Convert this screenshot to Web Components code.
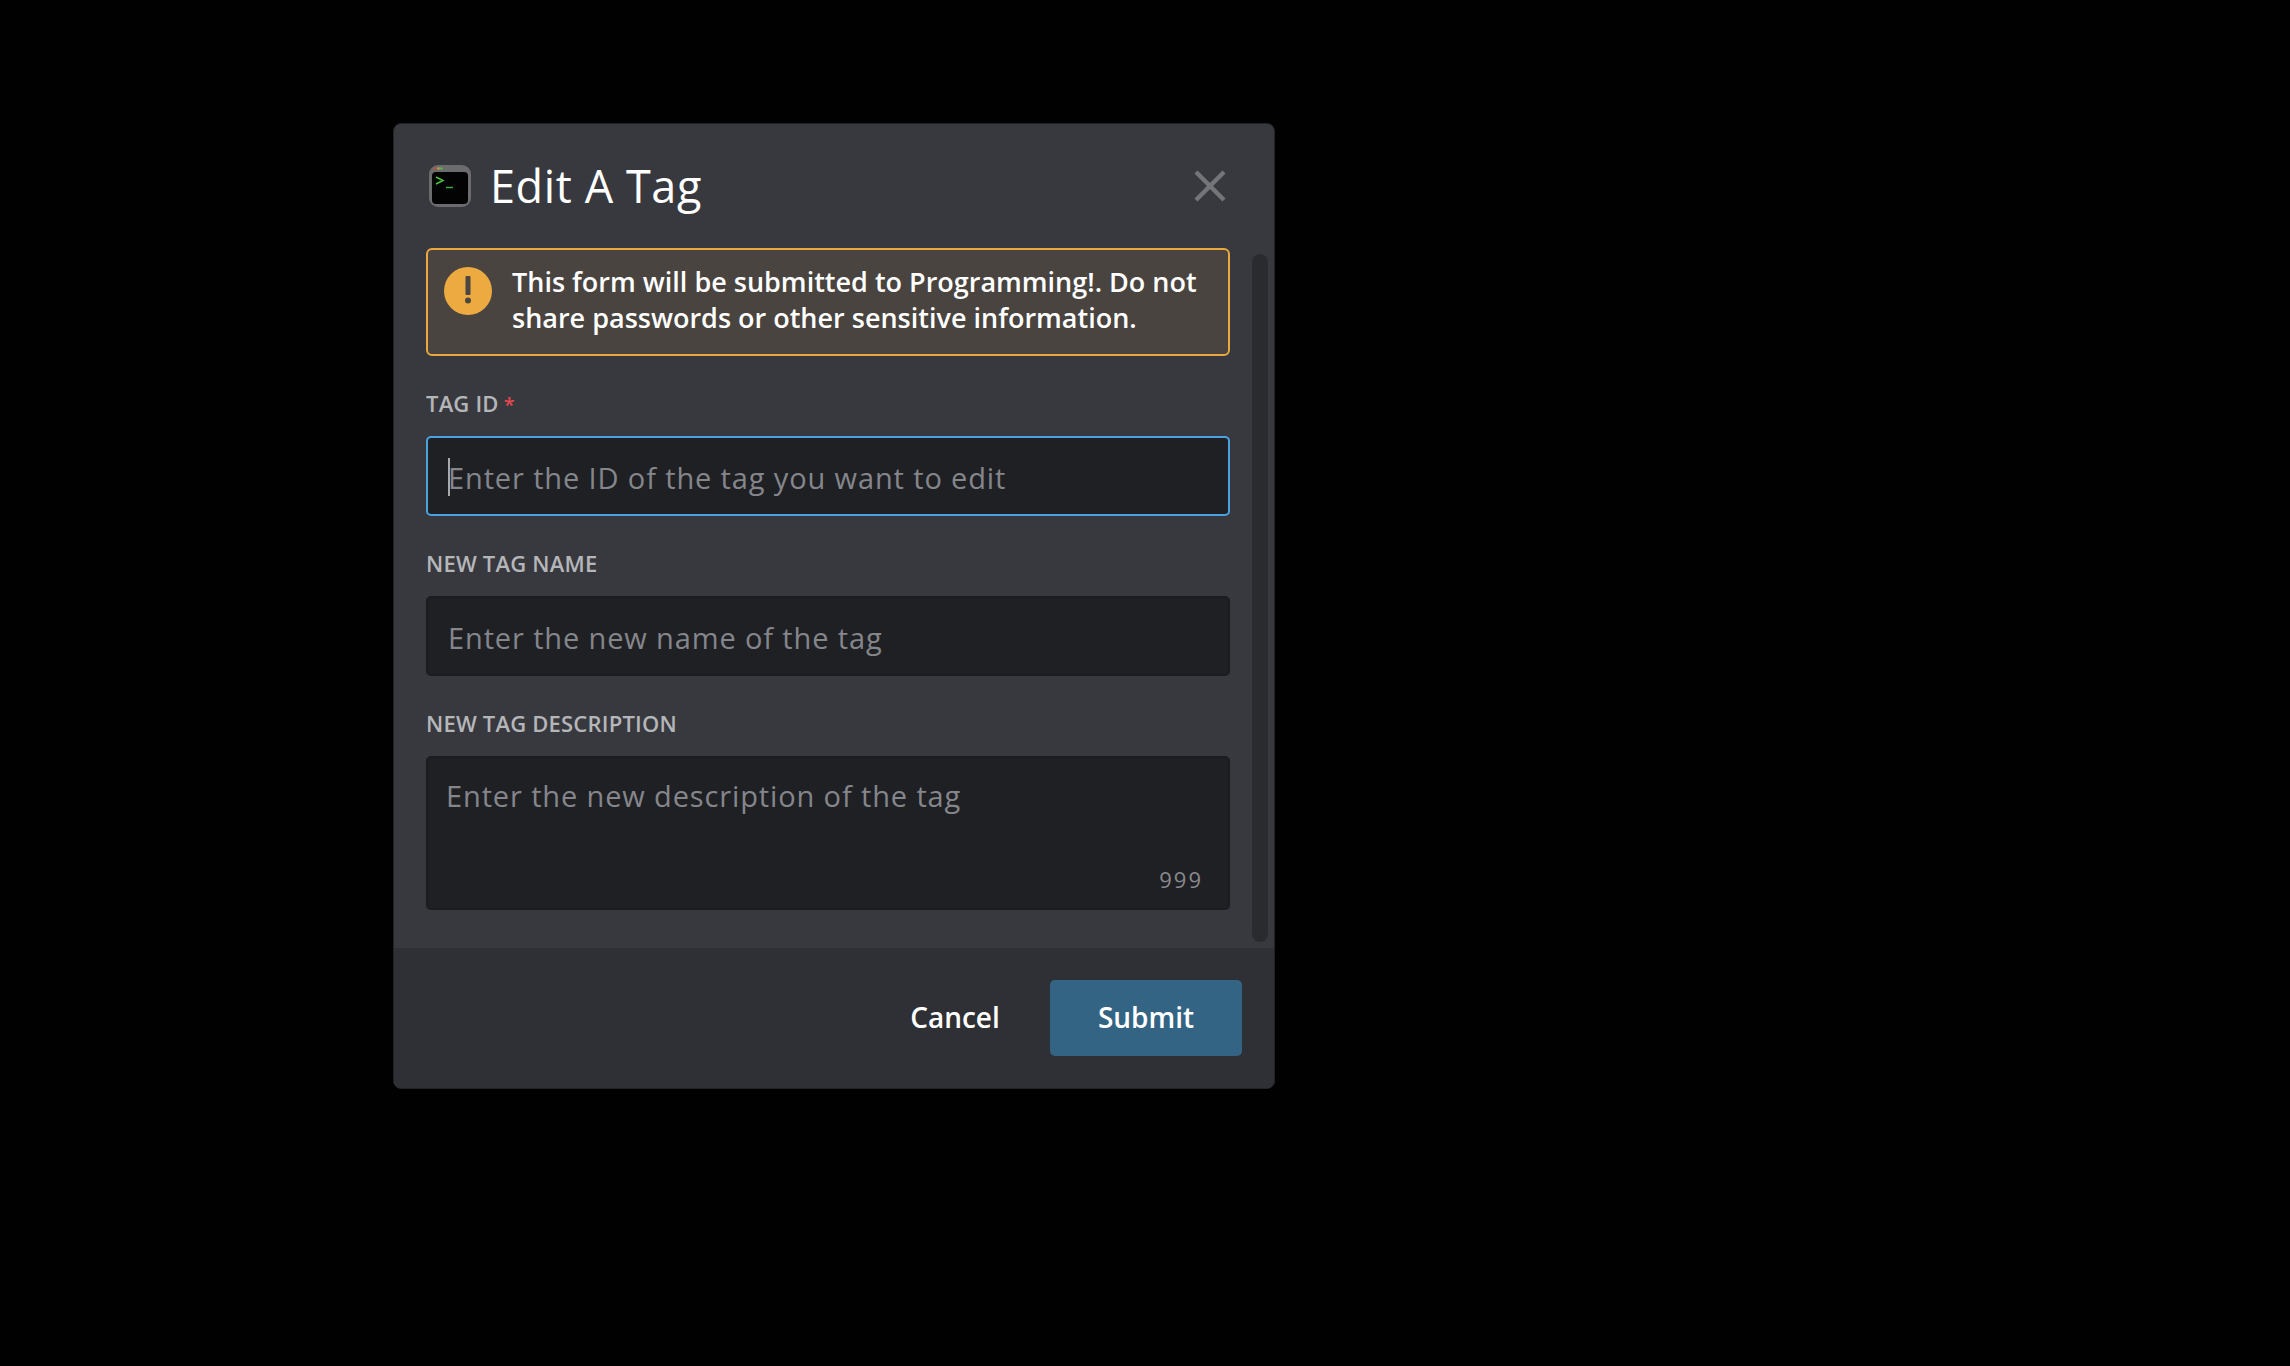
<!DOCTYPE html>
<html>
<head>
<meta charset="utf-8">
<title>Edit A Tag</title>
<style>
    html, body { margin: 0; background: #010102; }
    body { font-family: "Open Sans", "Noto Sans", sans-serif; }
</style>
</head>
<body>
<modal-backdrop>
    <tag-modal heading="Edit A Tag">
        <notice-box>This form will be submitted to Programming!. Do not share passwords or other sensitive information.</notice-box>
        <form-field label="Tag ID" required focused>Enter the ID of the tag you want to edit</form-field>
        <form-field label="New Tag Name">Enter the new name of the tag</form-field>
        <form-field label="New Tag Description" multiline count="999">Enter the new description of the tag</form-field>
        <action-button slot="footer" kind="plain">Cancel</action-button>
        <action-button slot="footer" kind="primary">Submit</action-button>
    </tag-modal>
</modal-backdrop>

<script>
class ModalBackdrop extends HTMLElement {
    constructor() {
        super();
        this.shadow = this.attachShadow({mode: 'open'});
        this.shadow.innerHTML = `
            <style>
                :host {
                    display: block;
                    box-sizing: border-box;
                    height: 1366px;
                    padding: 123px 0 0 393px;
                    overflow: hidden;
                    background: #010102;
                }
            </style>
            <slot></slot>
        `;
    }
}

class TagModal extends HTMLElement {
    constructor() {
        super();
        this.shadow = this.attachShadow({mode: 'open'});
    }

    connectedCallback() {
        this.shadow.innerHTML = `
            <style>
                :host {
                    display: flex;
                    flex-direction: column;
                    box-sizing: border-box;
                    width: 882px;
                    height: 966px;
                    background: #38393e;
                    border: 1px solid #222327;
                    border-radius: 8px;
                    overflow: hidden;
                    color: #fff;
                }
                header {
                    display: flex;
                    align-items: center;
                    height: 124px;
                    flex: none;
                    box-sizing: border-box;
                    padding: 0 48px 0 35px;
                }
                h1 {
                    flex: 1;
                    margin: 0 0 0 19px;
                    font: 500 45px/60px "Open Sans", sans-serif;
                    letter-spacing: 0.6px;
                }
                .terminal { width: 42px; height: 42px; display: block; }
                .close { width: 32px; height: 32px; display: block; }
                .body {
                    flex: 1;
                    display: flex;
                    min-height: 0;
                    padding-left: 32px;
                }
                .content {
                    flex: 1;
                    display: flex;
                    flex-direction: column;
                    gap: 41px;
                }
                .track {
                    flex: none;
                    width: 16px;
                    margin: 6px 6px 6px 22px;
                    background: #2a2b2f;
                    border-radius: 8px;
                }
                footer {
                    flex: none;
                    height: 140px;
                    box-sizing: border-box;
                    display: flex;
                    justify-content: flex-end;
                    align-items: flex-start;
                    padding: 32px 32px 0 0;
                    background: #2f3036;
                }
            </style>
            <header>
                <svg class="terminal" viewBox="0 0 42 42">
                    <rect width="42" height="42" rx="9" fill="#6c6c6e"/>
                    <rect x="3" y="7" width="36" height="32" rx="4" fill="#030303"/>
                    <circle cx="6" cy="3.5" r="1.3" fill="#c8503c"/>
                    <circle cx="9.5" cy="3.5" r="1.3" fill="#b5a53c"/>
                    <circle cx="12.5" cy="3.5" r="1.3" fill="#4fc03f"/>
                    <path d="M7 12l7 3.5l-7 3.5" fill="none" stroke="#4fc03f" stroke-width="1.5"/>
                    <path d="M17 22.5h7" fill="none" stroke="#3fa83a" stroke-width="1.5"/>
                </svg>
                <h1>${this.getAttribute('heading')}</h1>
                <svg class="close" viewBox="0 0 32 32">
                    <path d="M2 2L30 30M30 2L2 30" fill="none" stroke="#747579" stroke-width="4.4"/>
                </svg>
            </header>
            <div class="body">
                <div class="content"><slot></slot></div>
                <div class="track"></div>
            </div>
            <footer><slot name="footer"></slot></footer>
        `;
    }
}

class NoticeBox extends HTMLElement {
    constructor() {
        super();
        this.shadow = this.attachShadow({mode: 'open'});
        this.shadow.innerHTML = `
            <style>
                :host {
                    display: flex;
                    gap: 20px;
                    box-sizing: border-box;
                    height: 108px;
                    padding: 14px 10px 0 16px;
                    background: #49443f;
                    border: 2px solid #eaa93f;
                    border-radius: 6px;
                    color: #fff;
                    font: 600 27px/36px "Open Sans", sans-serif;
                }
                svg { flex: none; width: 48px; height: 48px; margin-top: 3px; }
                div { flex: 1; }
            </style>
            <svg viewBox="0 0 48 48">
                <circle cx="24" cy="24" r="24" fill="#ecaa40"/>
                <rect x="21.5" y="9" width="5" height="19" rx="1" fill="#4b4641"/>
                <circle cx="24" cy="33.5" r="3" fill="#4b4641"/>
            </svg>
            <div><slot></slot></div>
        `;
    }
}

class FormField extends HTMLElement {
    constructor() {
        super();
        this.shadow = this.attachShadow({mode: 'open'});
    }

    connectedCallback() {
        var multiline = this.hasAttribute('multiline');
        var star = this.hasAttribute('required') ? '<span class="star">*</span>' : '';
        var caret = this.hasAttribute('focused') ? '<i class="caret"></i>' : '';
        var count = this.getAttribute('count');

        this.shadow.innerHTML = `
            <style>
                :host {
                    display: block;
                    margin-top: -3px;
                }
                label {
                    display: block;
                    height: 30px;
                    margin-bottom: 12px;
                    font: 600 22px/18px "Open Sans", sans-serif;
                    letter-spacing: 0.2px;
                    text-transform: uppercase;
                    color: #b5b6ba;
                }
                .star { color: #e5484d; margin-left: 5px; font-size: 20px; }
                .box {
                    position: relative;
                    box-sizing: border-box;
                    display: flex;
                    align-items: center;
                    height: 80px;
                    padding: 3px 20px 0;
                    background: #1f2024;
                    border: 2px solid #1b1c1f;
                    border-radius: 5px;
                    color: #85868b;
                    font: 400 29px/36px "Open Sans", sans-serif;
                    letter-spacing: 0.87px;
                }
                .box.focused { border-color: #4aa3e0; }
                .box.multi {
                    height: 154px;
                    align-items: flex-start;
                    padding: 20px 18px;
                }
                .caret {
                    position: absolute;
                    left: 20px;
                    top: 20px;
                    width: 2px;
                    height: 38px;
                    background: #a8a9ad;
                }
                .count {
                    position: absolute;
                    right: 25px;
                    bottom: 15px;
                    font: 400 22px/28px "Open Sans", sans-serif;
                    letter-spacing: 2px;
                    color: #898a8f;
                }
            </style>
            <label>${this.getAttribute('label')}${star}</label>
            <div class="box ${multiline ? 'multi' : ''} ${caret ? 'focused' : ''}">
                ${caret}
                <span><slot></slot></span>
                ${count ? `<span class="count">${count}</span>` : ''}
            </div>
        `;
    }
}

class ActionButton extends HTMLElement {
    constructor() {
        super();
        this.shadow = this.attachShadow({mode: 'open'});
        this.shadow.innerHTML = `
            <style>
                :host {
                    display: flex;
                    align-items: center;
                    justify-content: center;
                    box-sizing: border-box;
                    height: 76px;
                    padding-bottom: 2px;
                    color: #fff;
                    font: 600 28px/36px "Open Sans", sans-serif;
                    border-radius: 5px;
                }
                :host([kind="primary"]) { width: 192px; background: #346484; }
                :host([kind="plain"]) { width: 192px; margin-right: -1px; }
            </style>
            <slot></slot>
        `;
    }
}

window.customElements.define('modal-backdrop', ModalBackdrop);
window.customElements.define('tag-modal', TagModal);
window.customElements.define('notice-box', NoticeBox);
window.customElements.define('form-field', FormField);
window.customElements.define('action-button', ActionButton);
</script>
</body>
</html>
